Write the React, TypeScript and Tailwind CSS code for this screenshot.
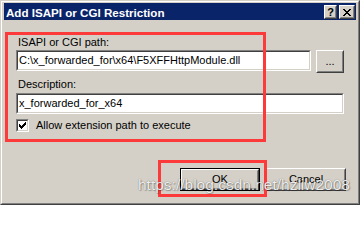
import React from "react";

const raised =
  "border border-t-white border-l-white border-r-[#404040] border-b-[#404040]";
const raisedInner =
  "border border-t-[#d4d0c8] border-l-[#d4d0c8] border-r-[#808080] border-b-[#808080]";
const sunken =
  "border border-t-[#808080] border-l-[#808080] border-r-white border-b-white";
const sunkenInner =
  "border border-t-[#404040] border-l-[#404040] border-r-[#d4d0c8] border-b-[#d4d0c8]";

function Button({ children, w, def }: { children: React.ReactNode; w: string; def?: boolean }) {
  const inner = (
    <div className={`${raised} h-full w-full`}>
      <div className={`${raisedInner} h-full w-full flex items-center justify-center leading-[13px]`}>
        {children}
      </div>
    </div>
  );
  if (def) {
    return <div className={`${w} h-[23px] border border-black`}>{inner}</div>;
  }
  return <div className={`${w} h-[23px]`}>{inner}</div>;
}

function TextBox({ w, text }: { w: string; text: string }) {
  return (
    <div className={`${w} h-[21px] ${sunken}`}>
      <div className={`${sunkenInner} h-full bg-white pl-[1px] leading-[17px] whitespace-nowrap overflow-hidden`}>
        {text}
      </div>
    </div>
  );
}

export default function App() {
  return (
    <div className="relative w-[362px] h-[207px] bg-white overflow-hidden font-['Liberation_Sans',Arial,sans-serif] text-[11px] text-black">
      <div className="w-[360px] h-[205px] bg-[#d4d0c8] border border-t-[#d4d0c8] border-l-[#d4d0c8] border-r-[#404040] border-b-[#404040]">
        <div className="h-full border border-t-white border-l-white border-r-[#808080] border-b-[#808080] pt-[1px] px-[2px]">
          {/* Title bar */}
          <div className="h-[17px] bg-[#0a246a] flex items-start">
            <div className="flex-1 pl-[2px] pt-[3px] text-white font-bold text-[11.6px] leading-[13px] whitespace-nowrap">
              Add ISAPI or CGI Restriction
            </div>
            <div className="flex gap-[2px] mt-[2px] mr-[1px]">
              <div className={`w-[13px] h-[14px] ${raised} bg-[#d4d0c8]`}>
                <div className={`${raisedInner} h-full flex items-center justify-center font-bold text-[11px] leading-[10px]`}>
                  ?
                </div>
              </div>
              <div className={`w-[16px] h-[14px] ${raised} bg-[#d4d0c8]`}>
                <div className={`${raisedInner} h-full flex items-center justify-center`}>
                  <svg width="8" height="7" viewBox="0 0 8 7" shapeRendering="crispEdges">
                    <path d="M0 0h2v1H0zM6 0h2v1H6zM1 1h2v1H1zM5 1h2v1H5zM2 2h4v1H2zM3 3h2v1H3zM2 4h4v1H2zM1 5h2v1H1zM5 5h2v1H5zM0 6h2v1H0zM6 6h2v1H6z" fill="#000" />
                  </svg>
                </div>
              </div>
            </div>
          </div>

          {/* Content */}
          <div className="pl-[12px] flex flex-col">
            <div className="mt-[16px] ml-[2px] h-[13px] leading-[13px]">ISAPI or CGI path:</div>
            <div className="mt-[1px] flex items-start gap-[5px]">
              <TextBox w="w-[295px]" text="C:\x_forwarded_for\x64\F5XFFHttpModule.dll" />
              <Button w="w-[28px]">...</Button>
            </div>
            <div className="mt-[5px] ml-[2px] h-[13px] leading-[13px]">Description:</div>
            <div className="mt-[2px]">
              <TextBox w="w-[328px]" text="x_forwarded_for_x64" />
            </div>
            <div className="mt-[5px] flex items-center gap-[7px] h-[13px]">
              <div className={`w-[13px] h-[13px] ${sunken}`}>
                <div className={`${sunkenInner} h-full bg-white flex items-center justify-center`}>
                  <svg width="7" height="7" viewBox="0 0 7 7" shapeRendering="crispEdges">
                    <path d="M6 0h1v1H6zM5 1h2v1H5zM0 2h1v1H0zM4 2h3v1H4zM0 3h2v1H0zM3 3h3v1H3zM0 4h5v1H0zM1 5h3v1H1zM2 6h1v1H2z" fill="#000" />
                  </svg>
                </div>
              </div>
              <div className="leading-[13px] whitespace-nowrap">Allow extension path to execute</div>
            </div>
            <div className="mt-[36px] pl-[164px] flex gap-[6px]">
              <Button w="w-[80px]" def>
                OK
              </Button>
              <Button w="w-[80px]">Cancel</Button>
            </div>
          </div>
        </div>
      </div>

      {/* Annotation overlays */}
      <div className="absolute left-[5px] top-[32px] w-[261px] h-[110px] border-[3px] border-[#fd3a3a]" />
      <div className="absolute left-[158px] top-[160px] w-[109px] h-[37px] border-[3px] border-[#fd3a3a]" />
      <div className="absolute left-[138px] top-[177px] text-[15.5px] leading-none whitespace-nowrap text-white/90 [text-shadow:0_0_1px_rgba(0,0,0,0.6),1px_1px_1px_rgba(0,0,0,0.25)]">
        https://blog.csdn.net/hzliw2008
      </div>
    </div>
  );
}
